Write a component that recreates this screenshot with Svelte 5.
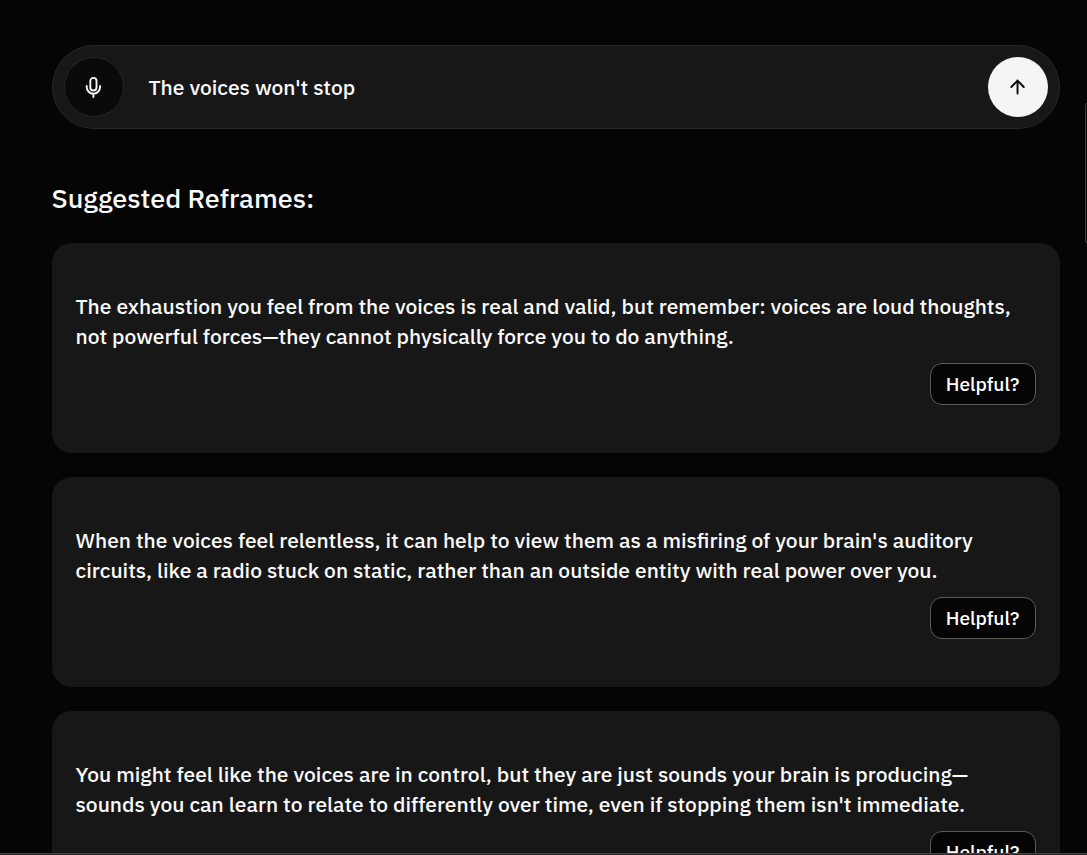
<script>
  const reframes = [
    'The exhaustion you feel from the voices is real and valid, but remember: voices are loud thoughts, not powerful forces—they cannot physically force you to do anything.',
    "When the voices feel relentless, it can help to view them as a misfiring of your brain's auditory circuits, like a radio stuck on static, rather than an outside entity with real power over you.",
    "You might feel like the voices are in control, but they are just sounds your brain is producing—sounds you can learn to relate to differently over time, even if stopping them isn't immediate."
  ];
</script>

<main>
  <form class="prompt" onsubmit={(e) => e.preventDefault()}>
    <button class="round mic" type="button" aria-label="Speak">
      <svg width="24" height="24" viewBox="0 0 24 24" fill="none" stroke="currentColor" stroke-width="1.9" stroke-linecap="round" stroke-linejoin="round">
        <rect x="8.3" y="2.9" width="6.2" height="12.6" rx="3.1" />
        <path d="M4.7 11v1a6.7 6.7 0 0 0 13.4 0v-1M11.4 18.7v3.4" />
      </svg>
    </button>
    <span class="query">The voices won't stop</span>
    <button class="round send" type="submit" aria-label="Send">
      <svg width="24" height="24" viewBox="0 0 24 24" fill="none" stroke="currentColor" stroke-width="2.1" stroke-linecap="round" stroke-linejoin="round">
        <path d="M11.5 19.2V5M4.7 12l6.8-7 6.8 7" />
      </svg>
    </button>
  </form>

  <h2>Suggested Reframes:</h2>

  <div class="list">
    {#each reframes as text}
      <article>
        <p>{text}</p>
        <button class="helpful">Helpful?</button>
      </article>
    {/each}
  </div>
  <div class="edge"></div>
  <div class="thumb"></div>
</main>

<style>
  :global(body) {
    background: #050505;
    overflow: hidden;
  }
  main {
    position: relative;
    box-sizing: border-box;
    width: 1087px;
    height: 855px;
    padding: 45px 27px 0 52px;
    overflow: hidden;
    background: #050505;
    color: #fafafa;
    font-family: 'IBM Plex Sans', 'Open Sans', sans-serif;
    font-weight: 500;
  }
  button {
    font: inherit;
    margin: 0;
    padding: 0;
    box-sizing: border-box;
  }
  .prompt {
    box-sizing: border-box;
    height: 84px;
    display: flex;
    align-items: center;
    padding: 0 11px;
    border: 1px solid #272727;
    border-radius: 42px;
    background: #171717;
  }
  .round {
    display: flex;
    align-items: center;
    justify-content: center;
    flex: none;
    width: 60px;
    height: 60px;
    border-radius: 50%;
  }
  .round svg {
    width: 24px;
    height: 24px;
  }
  .send svg {
    width: 22px;
    height: 22px;
    margin-right: 1px;
  }
  .mic {
    border: 1px solid #242424;
    background: #0a0a0a;
    color: #f5f5f5;
  }
  .send {
    border: 0;
    background: #f5f5f5;
    color: #0a0a0a;
  }
  .query {
    flex: 1;
    margin-left: 24.5px;
    font-size: 21px;
    line-height: 30px;
  }
  h2 {
    margin: 51px 0 0 -0.5px;
    height: 63px;
    font-size: 27px;
    font-weight: 500;
    line-height: 36px;
  }
  .list {
    display: grid;
    gap: 24px;
  }
  article {
    box-sizing: border-box;
    height: 210px;
    padding: 48px 24px;
    display: flex;
    flex-direction: column;
    border-radius: 20px;
    background: #171717;
  }
  p {
    margin: 0 0 0 -0.5px;
    font-size: 21px;
    line-height: 30px;
  }
  .helpful {
    align-self: flex-end;
    flex: none;
    width: 106px;
    height: 42px;
    margin-top: 12px;
    padding: 0 1px 2px 0;
    border: 1px solid #5a5a5a;
    border-radius: 12px;
    background: #050505;
    color: #fff;
    font-size: 19.2px;
    font-weight: 500;
    white-space: nowrap;
  }
  .edge {
    position: absolute;
    left: 0;
    right: 0;
    bottom: 0;
    height: 2px;
    box-sizing: border-box;
    border-top: 1px solid #444;
    background: #292729;
  }
  .thumb {
    position: absolute;
    left: 1085px;
    top: 101px;
    width: 10px;
    height: 144px;
    box-sizing: border-box;
    border: 1px solid #414141;
    border-radius: 6px;
  }
</style>
